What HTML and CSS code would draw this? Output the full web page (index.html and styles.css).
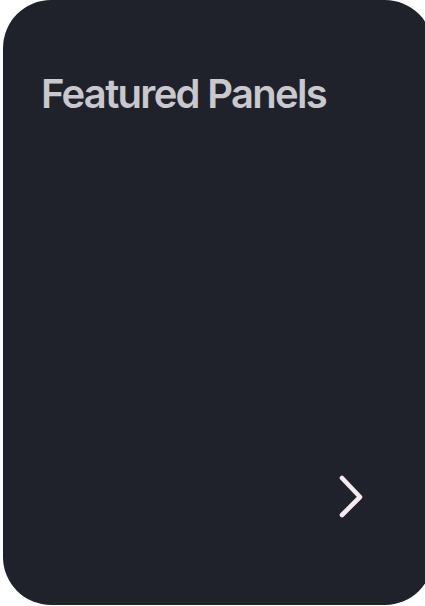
FILE: index.html
```html
<!DOCTYPE html>
<html>
<head>
<meta charset="utf-8">
<link rel="stylesheet" href="styles.css">
</head>
<body>
<div class="card">
  <h1 class="title">Featured Panels</h1>
  <div class="footer">
    <svg class="chev" width="28" height="48" viewBox="0 0 28 48">
      <path d="M4 5 L22 24 L4 42" fill="none" stroke="#f6eaf0" stroke-width="4.6" stroke-linecap="round" stroke-linejoin="round"/>
    </svg>
  </div>
</div>
</body>
</html>
```
FILE: styles.css
```css
html, body {
  margin: 0;
  padding: 0;
  background: #ffffff;
}
.card {
  box-sizing: border-box;
  margin-left: 3px;
  width: 430px;
  height: 605px;
  background: #1f222a;
  border-radius: 48px;
  padding: 72px 0 0 38px;
  display: flex;
  flex-direction: column;
}
.title {
  margin: 0;
  font-family: Inter, "Noto Sans", sans-serif;
  font-weight: 600;
  font-size: 40px;
  line-height: 44px;
  letter-spacing: -1.7px;
  color: #c8c8cd;
}
.footer {
  margin-top: auto;
  padding: 0 0 84px 297px;
}
.chev {
  display: block;
}
```
